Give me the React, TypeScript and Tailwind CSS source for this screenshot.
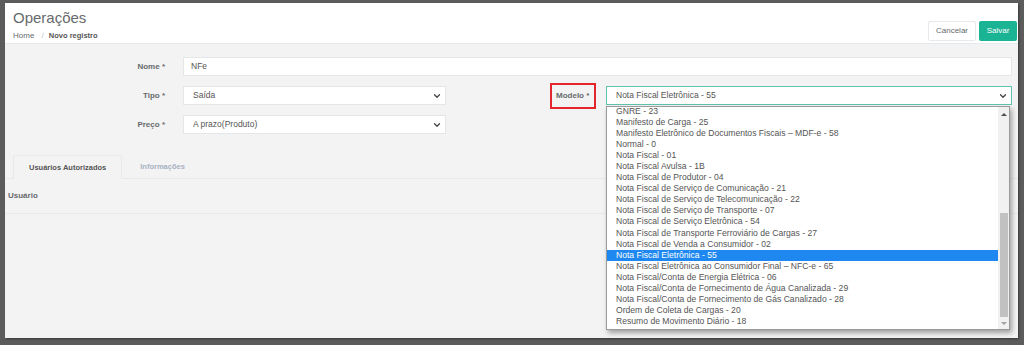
import { ChevronDown } from "lucide-react";

const modelos = [
  "GNRE - 23",
  "Manifesto de Carga - 25",
  "Manifesto Eletrônico de Documentos Fiscais – MDF-e - 58",
  "Normal - 0",
  "Nota Fiscal - 01",
  "Nota Fiscal Avulsa - 1B",
  "Nota Fiscal de Produtor - 04",
  "Nota Fiscal de Serviço de Comunicação - 21",
  "Nota Fiscal de Serviço de Telecomunicação - 22",
  "Nota Fiscal de Serviço de Transporte - 07",
  "Nota Fiscal de Serviço Eletrônica - 54",
  "Nota Fiscal de Transporte Ferroviário de Cargas - 27",
  "Nota Fiscal de Venda a Consumidor - 02",
  "Nota Fiscal Eletrônica - 55",
  "Nota Fiscal Eletrônica ao Consumidor Final – NFC-e - 65",
  "Nota Fiscal/Conta de Energia Elétrica - 06",
  "Nota Fiscal/Conta de Fornecimento de Água Canalizada - 29",
  "Nota Fiscal/Conta de Fornecimento de Gás Canalizado - 28",
  "Ordem de Coleta de Cargas - 20",
  "Resumo de Movimento Diário - 18",
];

const selected = "Nota Fiscal Eletrônica - 55";

function Label({ children }: { children: React.ReactNode }) {
  return (
    <div className="w-[160px] shrink-0 text-right text-[8px] font-bold text-[#676a6c]">
      {children}
    </div>
  );
}

function Select({ value, className }: { value: string; className: string }) {
  return (
    <div
      className={`h-[19px] flex items-center justify-between bg-white border pl-[9px] pr-[3px] text-[8.5px] text-[#555] ${className}`}
    >
      <span>{value}</span>
      <ChevronDown size={10} strokeWidth={3} className="text-[#444]" />
    </div>
  );
}

function Dropdown() {
  return (
    <div className="absolute left-[601px] top-[103px] w-[404px] h-[224px] bg-white border border-[#9a9a9a] shadow-[2px_3px_5px_rgba(0,0,0,0.35)] overflow-hidden">
      <div className="-mt-[1.5px] mr-[11px]">
        {modelos.map((m) => (
          <div
            key={m}
            className={`h-[11.1px] leading-[11.1px] pl-[9px] text-[8.6px] whitespace-nowrap ${
              m === selected ? "bg-[#1e88f0] text-white" : "text-[#555]"
            }`}
          >
            {m}
          </div>
        ))}
      </div>
      <div className="absolute right-0 top-0 bottom-0 w-[11px] bg-[#f1f1f1] flex flex-col items-center">
        <div className="mt-[6px] w-0 h-0 border-l-[3px] border-r-[3px] border-b-[3px] border-l-transparent border-r-transparent border-b-[#505050]" />
        <div className="mt-[97px] w-[8px] h-[104px] bg-[#c1c1c1]" />
        <div className="mt-[5px] w-0 h-0 border-l-[3px] border-r-[3px] border-t-[3px] border-l-transparent border-r-transparent border-t-[#a3a3a3]" />
      </div>
    </div>
  );
}

export default function App() {
  return (
    <div className="w-[1024px] h-[345px] bg-[#5c5c5c] pl-[5px] pt-[3px] pr-[6px] pb-[7px] font-['Liberation_Sans',Arial,sans-serif]">
      <div className="relative h-full bg-[#f3f3f4] shadow-[1px_1px_2px_rgba(0,0,0,0.4)] flex flex-col">
        <header className="h-[41px] shrink-0 bg-white border-b border-[#e7eaec] flex justify-between">
          <div className="pl-[8px] pt-[6px]">
            <h1 className="text-[15px] leading-[18px] text-[#676a6c]">Operações</h1>
            <div className="mt-[4px] text-[8px] leading-[10px] text-[#676a6c]">
              Home <span className="mx-[5px] text-[#bbb]">/</span>
              <span className="text-[7.5px] font-bold text-[#555]">Novo registro</span>
            </div>
          </div>
          <div className="flex items-start gap-[3px] pt-[18px] mr-[1px]">
            <button className="w-[48px] h-[20px] bg-white border border-[#e7eaec] rounded-[2px] text-[8px] text-[#676a6c]">
              Cancelar
            </button>
            <button className="w-[38px] h-[20px] bg-[#1ab394] rounded-[2px] text-[8px] text-white">
              Salvar
            </button>
          </div>
        </header>

        <div className="flex items-center h-[19px] mt-[13px]">
          <Label>Nome *</Label>
          <div className="ml-[18px] flex-1 mr-[6px] h-[19px] flex items-center bg-white border border-[#e5e6e7] pl-[7px] text-[8.5px] text-[#555]">
            NFe
          </div>
        </div>

        <div className="flex items-center h-[19px] mt-[10px]">
          <Label>Tipo *</Label>
          <Select value="Saída" className="ml-[18px] w-[263px] border-[#e5e6e7]" />
          <div className="ml-[104px] w-[46px] h-[26px] border-2 border-[#e3262b] flex items-center pl-[4px] text-[8px] font-bold text-[#676a6c]">
            Modelo *
          </div>
          <Select value={selected} className="ml-[10px] flex-1 mr-[6px] border-[#5fc3ae]" />
        </div>

        <div className="flex items-center h-[19px] mt-[10px]">
          <Label>Preço *</Label>
          <Select value="A prazo(Produto)" className="ml-[18px] w-[263px] border-[#e5e6e7]" />
        </div>

        <div className="mt-[21px] flex items-end border-b border-[#e7eaec] pl-[8px]">
          <div className="h-[24px] -mb-px px-[15px] flex items-center bg-[#f3f3f4] border border-b-0 border-[#e7eaec] rounded-t-[2px] text-[7.5px] font-bold text-[#555]">
            Usuários Autorizados
          </div>
          <div className="h-[23px] px-[18px] flex items-center text-[7.5px] font-bold text-[#a7b1c2]">
            Informações
          </div>
        </div>

        <div className="h-[35px] flex items-center pl-[3px] border-b border-[#e7eaec] text-[8px] font-bold text-[#676a6c]">
          Usuário
        </div>

        <Dropdown />
      </div>
    </div>
  );
}
